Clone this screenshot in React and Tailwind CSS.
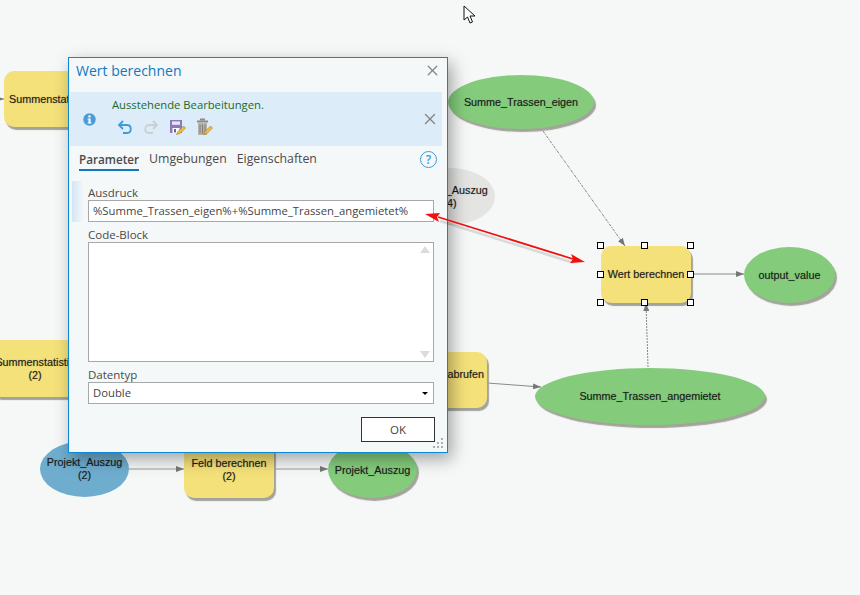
import { X } from "lucide-react";

const yellow = "absolute rounded-[10px] bg-[#f4e17a] shadow-[2px_3px_1px_#a3a39b] flex flex-col items-center justify-center text-center";
const green = "absolute rounded-[50%] bg-[#84cc7c] shadow-[2px_3px_1px_#a3a39b] flex flex-col items-center justify-center text-center";

const handles = [
  "left-[597px] top-[242px]", "left-[641px] top-[242px]", "left-[687px] top-[242px]",
  "left-[597px] top-[271px]", "left-[687px] top-[271px]",
  "left-[597px] top-[299px]", "left-[641px] top-[299px]", "left-[687px] top-[299px]",
];

function Arrows() {
  return (
    <svg className="absolute left-0 top-0" width="860" height="595" fill="none">
      <defs>
        <marker id="head" markerWidth="8" markerHeight="6" refX="8" refY="3" orient="auto" markerUnits="userSpaceOnUse">
          <path d="M0 0 L8 3 L0 6 Z" fill="#777" />
        </marker>
      </defs>
      <path d="M0 99 H4" stroke="#888" markerEnd="url(#head)" />
      <path d="M543 131 L625 246" stroke="#888" strokeDasharray="3 1 1 1" markerEnd="url(#head)" />
      <path d="M691 274 H744" stroke="#888" markerEnd="url(#head)" />
      <path d="M648 367 L646 303" stroke="#888" strokeDasharray="2 1" markerEnd="url(#head)" />
      <path d="M487 383 L541 387" stroke="#888" markerEnd="url(#head)" />
      <path d="M129 469 H184" stroke="#999" markerEnd="url(#head)" />
      <path d="M274 469 H328" stroke="#999" markerEnd="url(#head)" />
    </svg>
  );
}

function Canvas() {
  return (
    <div className="absolute inset-0 font-['Liberation_Sans',sans-serif] text-[10.8px] leading-[13px] text-[#1b1b1b] [text-shadow:0_0_1px_rgba(0,0,0,0.35)]">
      <Arrows />

      <div className={`${yellow} left-[4px] top-[71px] w-[90px] h-[56px] !items-start pl-[5px]`}>
        <span className="whitespace-nowrap">Summenstatistik</span>
      </div>
      <div className={`${green} left-[448px] top-[75px] w-[146px] h-[54px]`}>Summe_Trassen_eigen</div>

      <div className="absolute left-[405px] top-[168px] w-[90px] h-[57px] rounded-[50%] bg-[#e4e4e2] flex flex-col items-center justify-center text-center">
        <span>Projekt_Auszug</span>
        <span>(4)</span>
      </div>

      <div className={`${yellow} left-[601px] top-[246px] w-[90px] h-[57px]`}>Wert berechnen</div>
      <div className={`${green} left-[744px] top-[247px] w-[91px] h-[56px]`}>output_value</div>

      <div className={`${yellow} left-[-10px] top-[340px] w-[90px] h-[57px]`}>
        <span className="whitespace-nowrap">Summenstatistik</span>
        <span>(2)</span>
      </div>
      <div className={`${yellow} left-[397px] top-[352px] w-[90px] h-[56px] !items-end pr-[3px] pb-[12px]`}>Wert abrufen</div>
      <div className={`${green} left-[535px] top-[368px] w-[230px] h-[57px]`}>Summe_Trassen_angemietet</div>

      <div className="absolute left-[40px] top-[441px] w-[89px] h-[56px] rounded-[50%] bg-[#6fadcf] flex flex-col items-center justify-center text-center">
        <span>Projekt_Auszug</span>
        <span>(2)</span>
      </div>
      <div className={`${yellow} left-[184px] top-[442px] w-[90px] h-[56px]`}>
        <span>Feld berechnen</span>
        <span>(2)</span>
      </div>
      <div className={`${green} left-[328px] top-[442px] w-[89px] h-[56px]`}>Projekt_Auszug</div>

      {handles.map((pos) => (
        <div key={pos} className={`absolute ${pos} w-[7px] h-[7px] bg-white border border-black`} />
      ))}

      {/* mouse pointer */}
      <svg className="absolute left-[463px] top-[5px]" width="13" height="20" viewBox="0 0 13 20">
        <path d="M1 1 L1 15 L4.5 12 L7 18 L9.5 17 L7 11 L12 11 Z" fill="#fff" stroke="#111" strokeWidth="1" />
      </svg>
    </div>
  );
}

function InfoIcon() {
  return (
    <svg width="13" height="13" viewBox="0 0 13 13">
      <circle cx="6.5" cy="6.5" r="6.2" fill="#4c9bd6" />
      <rect x="5.4" y="2.4" width="2.2" height="2" fill="#fff" />
      <path d="M4.6 5.4 H7.6 V9.4 H8.6 V10.6 H4.6 V9.4 H5.5 V6.6 H4.6 Z" fill="#fff" />
    </svg>
  );
}

function Toolbar() {
  return (
    <div className="flex items-center gap-[10px] pl-[5px] mt-[6px]">
      <svg width="16" height="16" viewBox="0 0 16 16" fill="none" stroke="#3f9ad8" strokeWidth="1.8">
        <path d="M6 2 L2 6 L6 10" />
        <path d="M2.5 6 H10 C15 6 15 14 10 14 H6" />
      </svg>
      <svg width="16" height="16" viewBox="0 0 16 16" fill="none" stroke="#c9d0d4" strokeWidth="1.8">
        <path d="M10 2 L14 6 L10 10" />
        <path d="M13.5 6 H6 C1 6 1 14 6 14 H10" />
      </svg>
      <svg width="17" height="17" viewBox="0 0 17 17">
        <path d="M1 1 H13 V14 H1 Z" fill="#8a79bd" />
        <rect x="3" y="2.4" width="8" height="3.4" fill="#e9e5f3" />
        <rect x="3.5" y="9" width="7" height="5" fill="#fff" />
        <rect x="5" y="10" width="2" height="3.4" fill="#6d5fa0" />
        <path d="M7.5 15.5 L9 12.5 L14.5 7 L16.5 9 L11 14.5 Z" fill="#eebd3f" stroke="#8a6a20" strokeWidth="0.5" />
      </svg>
      <svg width="17" height="18" viewBox="0 0 17 18">
        <rect x="4" y="0.5" width="5" height="2" fill="#8b8b85" />
        <rect x="1" y="2.5" width="11" height="2" fill="#8b8b85" />
        <path d="M2 5 H11 V17 H2 Z" fill="#b5b5ad" />
        <path d="M4 6.5 V15.5 M6.5 6.5 V15.5 M9 6.5 V15.5" stroke="#7d7d76" />
        <path d="M7.5 16.5 L9 13.5 L14.5 8 L16.5 10 L11 15.5 Z" fill="#eebd3f" stroke="#8a6a20" strokeWidth="0.5" />
      </svg>
    </div>
  );
}

function Field({ label, children, className = "" }) {
  return (
    <div className={`mr-[13px] ml-[19px] ${className}`}>
      <div className="text-[11.5px] leading-[14px] text-[#4a4a4a]">{label}</div>
      {children}
    </div>
  );
}

function Dialog() {
  return (
    <div className="absolute left-[68px] top-[57px] w-[380px] h-[396px] bg-[#f5f8f8] border border-[#0c87d4] shadow-[4px_6px_16px_rgba(0,0,0,0.35)] font-['Open_Sans',sans-serif] flex flex-col">
      <div className="h-[34px] flex items-center justify-between pl-[7px] pr-[6px] pb-[10px]">
        <span className="text-[14px] text-[#0f78bf]">Wert berechnen</span>
        <X size={17} strokeWidth={1.8} className="text-[#858585]" />
      </div>

      <div className="ml-[1px] mr-[5px] h-[54px] bg-[#dcecf8] flex items-center pl-[13px] pr-[3px]">
        <InfoIcon />
        <div className="ml-[16px] flex-1 -mt-[5px]">
          <div className="text-[11.25px] leading-[15px] text-[#1b6b2a]">Ausstehende Bearbeitungen.</div>
          <Toolbar />
        </div>
        <X size={18} strokeWidth={1.8} className="text-[#858585]" />
      </div>

      <div className="flex items-center pl-[10px] pr-[10px] h-[25px] text-[12.3px] text-[#4a4a4a]">
        <span className="border-b-2 border-[#0f78bf] font-semibold text-[11.7px] leading-[20px] mt-[2px]">Parameter</span>
        <span className="ml-[10px] leading-[20px]">Umgebungen</span>
        <span className="ml-[10px] leading-[20px]">Eigenschaften</span>
        <span className="ml-auto mt-[2px] w-[17px] h-[17px] rounded-full border-[1.5px] border-[#3f9ad8] text-[#3f9ad8] flex items-center justify-center text-[12px] font-semibold">?</span>
      </div>

      <div className="relative mt-[15px]">
        <div className="absolute left-[3px] -top-[5px] w-[12px] h-[41px] bg-gradient-to-r from-[#d3e6f5] to-transparent" />
        <Field label="Ausdruck" className="relative">
          <div className="h-[22px] border border-[#a8a8a8] bg-white px-[4px] text-[11.3px] leading-[20px] text-[#444] whitespace-nowrap">
            %Summe_Trassen_eigen%+%Summe_Trassen_angemietet%
          </div>
        </Field>
      </div>

      <Field label="Code-Block" className="mt-[6px]">
        <div className="h-[120px] border border-[#a8a8a8] bg-white flex flex-col justify-between items-end pr-[3px] py-[3px]">
          <div className="w-0 h-0 border-x-[5px] border-x-transparent border-b-[7px] border-b-[#dcdcdc]" />
          <div className="w-0 h-0 border-x-[5px] border-x-transparent border-t-[7px] border-t-[#dcdcdc]" />
        </div>
      </Field>

      <Field label="Datentyp" className="mt-[6px]">
        <div className="h-[22px] border border-[#a8a8a8] bg-white pl-[4px] pr-[5px] flex items-center justify-between text-[11.3px] text-[#444]">
          <span>Double</span>
          <div className="w-0 h-0 border-x-[3px] border-x-transparent border-t-[3px] border-t-black" />
        </div>
      </Field>

      <div className="flex justify-end mr-[12px] mt-[13px]">
        <div className="w-[74px] h-[25px] border border-[#333] bg-white flex items-center justify-center text-[11.5px] text-[#444]">OK</div>
      </div>

      {/* resize grip */}
      <svg className="absolute right-[3px] bottom-[3px]" width="11" height="11" fill="#aab0b0">
        <rect x="8" y="0" width="2" height="2" />
        <rect x="4" y="4" width="2" height="2" />
        <rect x="8" y="4" width="2" height="2" />
        <rect x="0" y="8" width="2" height="2" />
        <rect x="4" y="8" width="2" height="2" />
        <rect x="8" y="8" width="2" height="2" />
      </svg>
    </div>
  );
}

function RedArrow() {
  return (
    <svg className="absolute left-0 top-0 pointer-events-none" width="860" height="595" fill="none">
      <path d="M440 221 L574 263" stroke="#000" strokeOpacity="0.12" strokeWidth="2.5" />
      <path d="M438 217 L573 259" stroke="#f01010" strokeWidth="1.8" />
      <path d="M425 214 L440 213 L437 217 L439 222 Z" fill="#f01010" />
      <path d="M585 262 L570 263 L573 259 L571 254 Z" fill="#f01010" />
    </svg>
  );
}

export default function App() {
  return (
    <div className="relative w-[860px] h-[595px] overflow-hidden bg-[#f6f8f8]">
      <Canvas />
      <Dialog />
      <RedArrow />
    </div>
  );
}
